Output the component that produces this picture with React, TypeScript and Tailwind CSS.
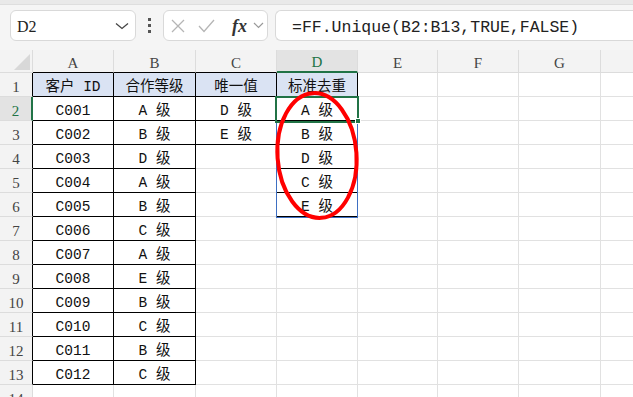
import React from "react";

const colWidths = ["w-[33px]", "w-[81px]", "w-[82px]", "w-[81px]", "w-[81px]", "w-[80px]", "w-[81px]", "w-[82px]", "w-[81px]"];
// H sits past the right edge, its label is never in view
const letters = ["A", "B", "C", "D", "E", "F", "G", ""];

const data: Record<number, string[]> = {
  1: ["客户 ID", "合作等级", "唯一值", "标准去重"],
  2: ["C001", "A 级", "D 级", "A 级"],
  3: ["C002", "B 级", "E 级", "B 级"],
  4: ["C003", "D 级", "", "D 级"],
  5: ["C004", "A 级", "", "C 级"],
  6: ["C005", "B 级", "", "E 级"],
  7: ["C006", "C 级"],
  8: ["C007", "A 级"],
  9: ["C008", "E 级"],
  10: ["C009", "B 级"],
  11: ["C010", "C 级"],
  12: ["C011", "B 级"],
  13: ["C012", "C 级"],
};

// which cells carry the black table border
const boxed = (r: number, c: number) =>
  (c >= 1 && c <= 2 && r >= 1 && r <= 13) ||
  (c === 3 && r >= 1 && r <= 3) ||
  (c === 4 && r >= 1 && r <= 6);

function NameBox() {
  return (
    <div className="w-[126px] h-[31px] bg-white border border-[#d9d9d9] rounded-[6px] flex items-center pl-[6px] pr-[4px]">
      <span className="font-['Liberation_Serif',serif] text-[16px] text-[#222] flex-1 pt-[3px]">D2</span>
      <svg width="14" height="8" viewBox="0 0 14 8" className="mr-[2px]">
        <path d="M1 1.5 L7 6.5 L13 1.5" fill="none" stroke="#444" strokeWidth="1.3" />
      </svg>
    </div>
  );
}

function FxBox() {
  return (
    <div className="w-[105px] h-[31px] bg-white border border-[#d9d9d9] rounded-[6px] flex items-center pl-[7px]">
      <svg width="14" height="14" viewBox="0 0 14 14">
        <path d="M1 1 L13 13 M13 1 L1 13" stroke="#b5b5b5" strokeWidth="1.3" />
      </svg>
      <svg width="17" height="14" viewBox="0 0 17 14" className="ml-[13px]">
        <path d="M1 7 L6 12.5 L16 1" fill="none" stroke="#b5b5b5" strokeWidth="1.3" />
      </svg>
      <span className="ml-[17px] font-['Liberation_Serif',serif] italic font-bold text-[18px] leading-none text-[#333]">fx</span>
      <svg width="11" height="7" viewBox="0 0 11 7" className="ml-[6px]">
        <path d="M1 1 L5.5 5.5 L10 1" fill="none" stroke="#999" strokeWidth="1.2" />
      </svg>
    </div>
  );
}

function Toolbar() {
  return (
    <div className="h-[50px] bg-[#f5f5f5]">
      <div className="h-[5px] bg-[#e9e9e9] border-b border-[#dedede]" />
      <div className="flex items-center pl-[10px] mt-[5px]">
        <NameBox />
        <div className="w-[27px] flex flex-col items-center gap-[3px]">
          <div className="w-[3px] h-[3px] bg-[#555]" />
          <div className="w-[3px] h-[3px] bg-[#555]" />
          <div className="w-[3px] h-[3px] bg-[#555]" />
        </div>
        <FxBox />
        <div className="ml-[7px] flex-1 h-[31px] bg-white border border-r-0 border-[#d9d9d9] rounded-l-[6px] flex items-center pl-[16px] pt-[6px] mr-[-10px]">
          <span className="font-['Liberation_Mono',monospace] text-[16.5px] text-[#222]">=FF.Unique(B2:B13,TRUE,FALSE)</span>
        </div>
      </div>
    </div>
  );
}

function HeaderRow() {
  return (
    <div className="flex h-[23px]">
      <div className={`${colWidths[0]} shrink-0 bg-[#f3f3f3] border-r border-b border-[#dcdcdc] flex items-end justify-end pr-[2px] pb-[2px]`}>
        <svg width="16" height="16" viewBox="0 0 16 16">
          <path d="M16 0 L16 16 L0 16 Z" fill="#d8d8d8" />
        </svg>
      </div>
      {letters.map((l, i) => {
        const c = i + 1;
        const sel = c === 4;
        return (
          <div
            key={c}
            className={`${colWidths[c]} shrink-0 flex items-center justify-center pt-[4px] border-r border-r-[#dcdcdc] font-['Liberation_Serif',serif] text-[15px] ${
              sel
                ? "bg-[#e3e3e3] text-[#217346] border-b-2 border-b-[#217346]"
                : boxed(1, c)
                ? "bg-[#f3f3f3] text-[#444] border-b border-b-black"
                : "bg-[#f3f3f3] text-[#444] border-b border-b-[#dcdcdc]"
            }`}
          >
            {l}
          </div>
        );
      })}
    </div>
  );
}

function Row({ r }: { r: number }) {
  const vals = data[r] || [];
  const sel = r === 2;
  return (
    <div className="flex h-[24px]">
      <div
        className={`${colWidths[0]} shrink-0 flex items-center justify-center pt-[6px] border-b border-b-[#dcdcdc] font-['Liberation_Serif',serif] text-[15px] ${
          sel
            ? "bg-[#e3e3e3] text-[#217346] border-r-2 border-r-[#217346]"
            : boxed(r, 1)
            ? "bg-[#f3f3f3] text-[#444] border-r border-r-black"
            : "bg-[#f3f3f3] text-[#444] border-r border-r-[#dcdcdc]"
        }`}
      >
        {r}
      </div>
      {letters.map((_, i) => {
        const c = i + 1;
        const right = boxed(r, c) || boxed(r, c + 1) ? "border-r-black" : "border-r-[#e1e1e1]";
        const bottom = boxed(r, c) || boxed(r + 1, c) ? "border-b-black" : "border-b-[#e1e1e1]";
        const fill = r === 1 && c <= 4 ? "bg-[#dae3f3]" : "bg-white";
        return (
          <div
            key={c}
            className={`${colWidths[c]} shrink-0 flex items-center justify-center pt-[6px] border-r border-b ${right} ${bottom} ${fill} font-['Liberation_Mono','Noto_Sans_CJK_SC',monospace] text-[14.5px] text-[#111] whitespace-pre`}
          >
            {vals[i] || ""}
          </div>
        );
      })}
    </div>
  );
}

export default function App() {
  const rows = Array.from({ length: 14 }, (_, i) => i + 1);
  return (
    <div className="relative w-[633px] h-[397px] overflow-hidden bg-white">
      <Toolbar />
      <HeaderRow />
      {rows.map((r) => (
        <Row key={r} r={r} />
      ))}

      {/* range highlight D3:D6 */}
      <div className="absolute left-[276px] top-[121px] w-[82px] h-[97px] border border-[#3e6fc2]" />
      {/* active cell D2 */}
      <div className="absolute left-[275px] top-[96px] w-[84px] h-[27px] border-2 border-[#217346]" />
      <div className="absolute left-[355px] top-[118px] w-[6px] h-[6px] bg-[#217346] border border-white" />

      {/* red annotation ring */}
      <svg className="absolute left-0 top-0 pointer-events-none" width="633" height="397">
        <ellipse cx="317" cy="155.5" rx="39.5" ry="62.5" fill="none" stroke="#ff0000" strokeWidth="4" transform="rotate(-4 317 155.5)" />
      </svg>
    </div>
  );
}
